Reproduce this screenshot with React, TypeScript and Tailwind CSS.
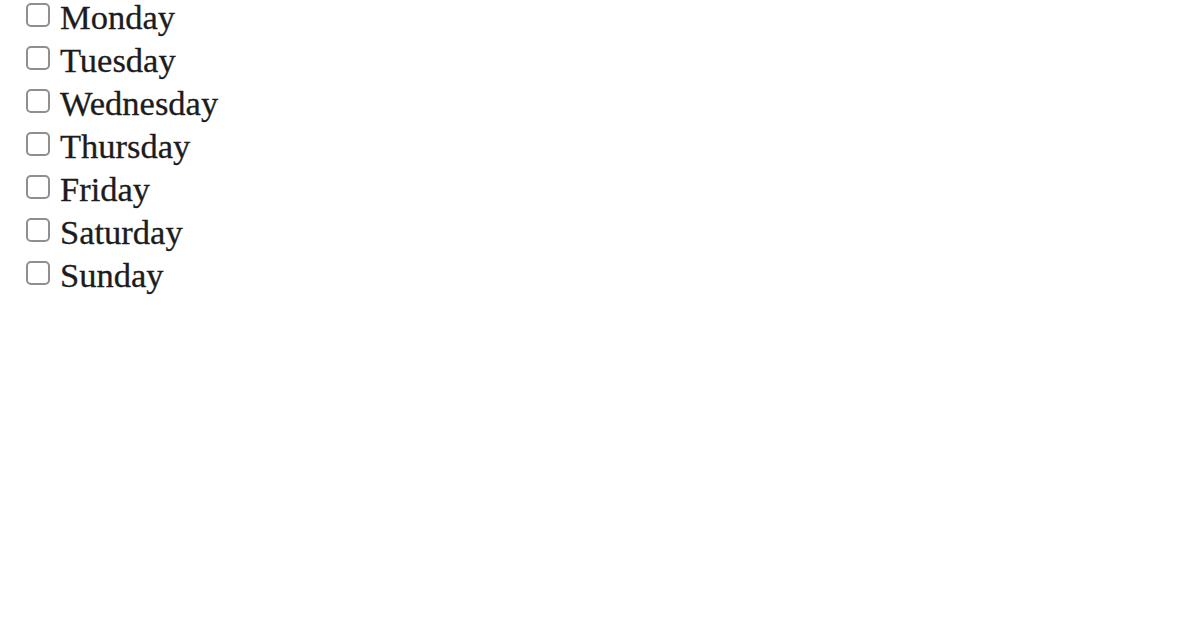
const days = ['Monday', 'Tuesday', 'Wednesday', 'Thursday', 'Friday', 'Saturday', 'Sunday'];

export default function App() {
  return (
    <div className="h-[628px] w-[1196px] overflow-hidden bg-white pl-[26px] pt-[2px]" style={{ fontFamily: '"Liberation Serif", serif' }}>
      {days.map((d) => (
        <label key={d} className="flex h-[43px] items-start gap-[10px] text-[34.5px] leading-[32px] text-[#1c1c1c] [-webkit-text-stroke:0.3px_#1c1c1c]">
          <span className="mt-[1px] block h-[24px] w-[24px] shrink-0 rounded-[5px] border-2 border-[#8f8f8f] bg-white" />
          <span className="-mt-[1.5px]">{d}</span>
        </label>
      ))}
    </div>
  );
}
